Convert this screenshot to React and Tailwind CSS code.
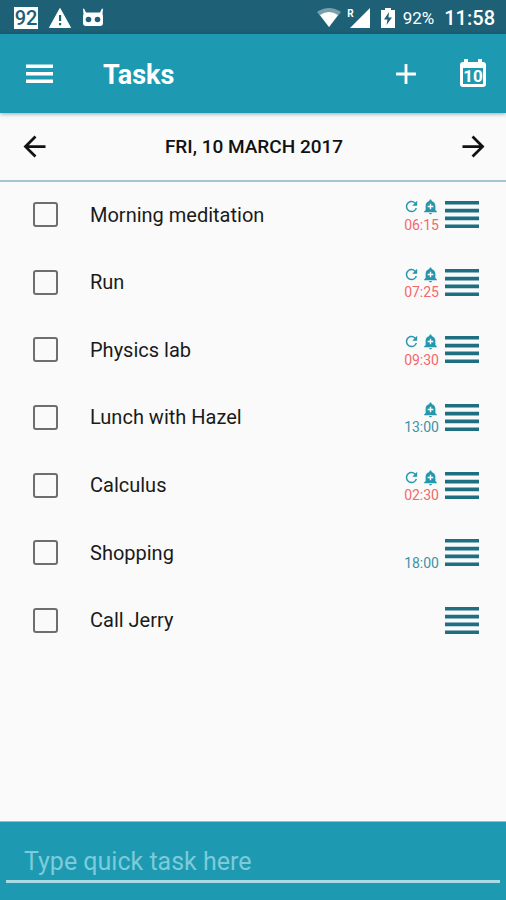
import { useState } from "react";
import { MdAdd, MdAddAlert, MdArrowBack, MdArrowForward, MdRefresh } from "react-icons/md";

const tasks = [
  { id: 1, name: "Morning meditation", time: "06:15", repeat: true, alarm: true, late: true },
  { id: 2, name: "Run", time: "07:25", repeat: true, alarm: true, late: true },
  { id: 3, name: "Physics lab", time: "09:30", repeat: true, alarm: true, late: true },
  { id: 4, name: "Lunch with Hazel", time: "13:00", repeat: false, alarm: true, late: false },
  { id: 5, name: "Calculus", time: "02:30", repeat: true, alarm: true, late: true },
  { id: 6, name: "Shopping", time: "18:00", repeat: false, alarm: false, late: false },
  { id: 7, name: "Call Jerry", time: "", repeat: false, alarm: false, late: false },
];

function StatusBar() {
  return (
    <div className="flex h-[34px] items-center justify-between bg-[#1e6076] pt-[2px] pr-[11px] pl-[14px] text-white">
      <div className="flex items-center gap-[11px]">
        <span className="flex h-[22px] w-[24px] items-center justify-center bg-white text-[20px] leading-none font-medium text-[#1e6076]">
          92
        </span>
        <svg width="22" height="20" viewBox="0 0 22 20">
          <path d="M11 0.500L21.500 19.500H0.500Z" fill="white" stroke="white" strokeLinejoin="round" />
          <path d="M10 7h2.200v6h-2.200zM10 15h2.200v2.300h-2.200z" fill="#1e6076" />
        </svg>
        <svg width="22" height="20" viewBox="0 0 22 20">
          <path
            d="M1 1Q2 0 2.500 1.500L4 4.500H18L19.500 1.500Q20 0 21 1L20.500 6L21 8V15Q21 18 18 18H4Q1 18 1 15V8L1.500 6Z"
            fill="white"
          />
          <circle cx="6.500" cy="11.500" r="2.800" fill="#1e6076" />
          <circle cx="15.500" cy="11.500" r="2.800" fill="#1e6076" />
        </svg>
      </div>
      <div className="flex items-center">
        <svg width="24" height="20" viewBox="0 0 24 20">
          <path d="M0 4Q12 -4 24 4L12 19Z" fill="white" opacity="0.4" />
          <path d="M3 7Q12 1 21 7L12 19Z" fill="white" />
        </svg>
        <span className="ml-[6px] self-start text-[10px] leading-[12px] font-bold">R</span>
        <svg className="-ml-[4px]" width="20" height="20" viewBox="0 0 20 20">
          <path d="M20 0V20H0Z" fill="white" />
        </svg>
        <svg className="ml-[11px]" width="14" height="20" viewBox="0 0 14 20">
          <path d="M0 2H4V0H10V2H14V20H0Z" fill="white" />
          <path d="M8 4L3 11.500H6.500L5.500 17L11 9.500H7.500Z" fill="#1e6076" />
        </svg>
        <span className="ml-[8px] text-[17px] leading-none">92%</span>
        <span className="ml-[10px] text-[20px] leading-none font-medium">11:58</span>
      </div>
    </div>
  );
}

function MenuIcon() {
  return (
    <svg width="27" height="20" viewBox="0 0 27 20" fill="white">
      <path d="M0 0.500h27v3.500H0zM0 8h27v3.500H0zM0 15.500h27v3.500H0z" />
    </svg>
  );
}

function CalendarIcon() {
  return (
    <svg width="26" height="30" viewBox="0 0 26 30">
      <path
        d="M3 3H4V0H8V3H18V0H22V3H23Q26 3 26 6V25Q26 28 23 28H3Q0 28 0 25V6Q0 3 3 3ZM3 9V25H23V9Z"
        fill="white"
        fillRule="evenodd"
      />
      <text x="13" y="23" textAnchor="middle" fontSize="17" fontWeight="700" fill="white">
        10
      </text>
    </svg>
  );
}

function AppBar() {
  return (
    <header className="relative flex h-[79px] items-center bg-[#1d9ab1] pr-[20px] pl-[26px] text-white shadow-[0_1px_4px_rgba(0,0,0,0.35)]">
      <button type="button" aria-label="Menu">
        <MenuIcon />
      </button>
      <h1 className="ml-[50px] flex-1 pt-[3px] text-[27px] font-bold">Tasks</h1>
      <button type="button" aria-label="Add task">
        <MdAdd size={34} />
      </button>
      <button type="button" aria-label="Go to today" className="ml-[37px]">
        <CalendarIcon />
      </button>
    </header>
  );
}

function DateBar() {
  return (
    <div className="flex h-[69px] items-center justify-between border-b-2 border-[#a5c5d2] pr-[16px] pl-[18px] text-[#111]">
      <button type="button" aria-label="Previous day">
        <MdArrowBack size={33} />
      </button>
      <h2 className="pt-[2px] text-[19px] font-medium">FRI, 10 MARCH 2017</h2>
      <button type="button" aria-label="Next day">
        <MdArrowForward size={33} />
      </button>
    </div>
  );
}

function TaskRow({ task }) {
  const [done, setDone] = useState(false);

  return (
    <li className="flex items-center pr-[27px] pb-[2px] pl-[33px]">
      <input
        id={`task-${task.id}`}
        type="checkbox"
        checked={done}
        onChange={(e) => setDone(e.target.checked)}
        className="size-[25px] appearance-none rounded-[3px] border-2 border-[#6e6e6e] checked:bg-[#1d9ab1]"
      />
      <label htmlFor={`task-${task.id}`} className="ml-[32px] flex-1 text-[20px] text-[#1a1a1a]">
        {task.name}
      </label>
      <div className="flex flex-col items-end pt-[2px]">
        <div className="flex h-[18px] items-center gap-[2px] text-[#2596ab]">
          {task.repeat && <MdRefresh size={17} />}
          {task.alarm && <MdAddAlert size={17} />}
        </div>
        <span className={`h-[18px] text-[14px] leading-[18px] ${task.late ? "text-[#f4686b]" : "text-[#3d93a6]"}`}>
          {task.time}
        </span>
      </div>
      <button type="button" aria-label={`Move ${task.name}`} className="ml-[6px]">
        <svg width="34" height="27" viewBox="0 0 34 27" fill="#1f6f82">
          <path d="M0 0h34v3.600H0zM0 7.800h34v3.600H0zM0 15.600h34v3.600H0zM0 23.400h34v3.600H0z" />
        </svg>
      </button>
    </li>
  );
}

export default function App() {
  const [text, setText] = useState("");

  return (
    <div className="flex min-h-screen flex-col bg-[#fafafa] font-[Roboto,sans-serif]">
      <StatusBar />
      <AppBar />
      <DateBar />
      <main className="flex-1">
        <ul className="grid h-[473px] grid-rows-7">
          {tasks.map((task) => (
            <TaskRow key={task.id} task={task} />
          ))}
        </ul>
      </main>
      <form
        className="h-[79px] border-t border-[#8cc0cc] bg-[#1d9ab1] px-[6px] pt-[18px]"
        onSubmit={(e) => e.preventDefault()}
      >
        <input
          type="text"
          aria-label="Quick task"
          placeholder="Type quick task here"
          value={text}
          onChange={(e) => setText(e.target.value)}
          className="block h-[43px] w-full border-b-[3px] border-[#a9dbe5] px-[18px] pt-[2px] text-[25px] text-white outline-none placeholder:text-[#7ccbda]"
        />
      </form>
    </div>
  );
}
